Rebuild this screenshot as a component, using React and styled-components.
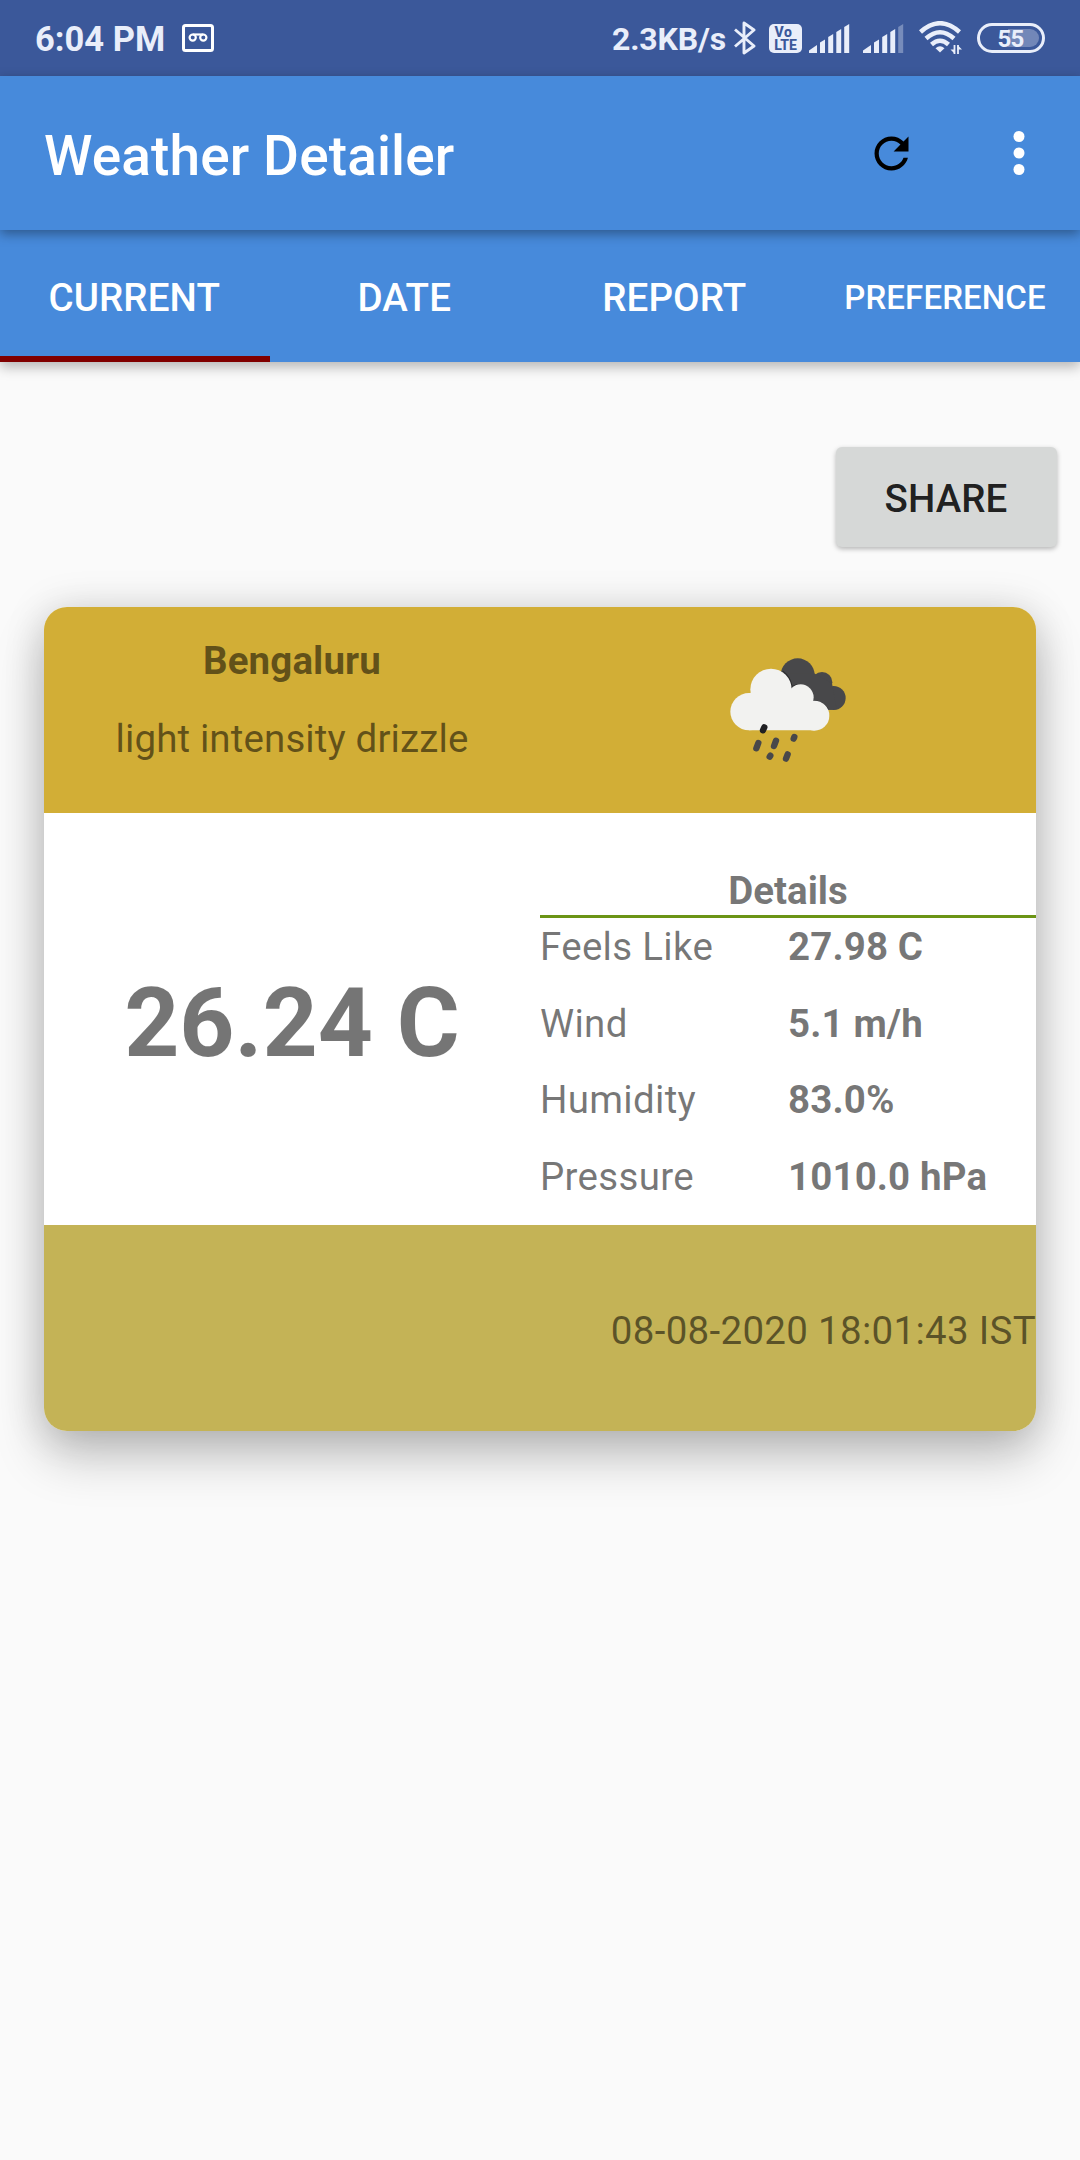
import React from "react";
import styled, { createGlobalStyle } from "styled-components";

const GlobalStyle = createGlobalStyle`
  * { box-sizing: border-box; }
  body {
    margin: 0;
    background: #fafafa;
    font-family: Roboto, "Liberation Sans", sans-serif;
    font-size: 38.5px;
    line-height: 46px;
  }
  svg { display: block; flex: none; }
`;

const Screen = styled.div`
  width: 1080px;
  height: 2160px;
  overflow: hidden;
  display: flex;
  flex-direction: column;
  background: #fafafa;
`;

const StatusBar = styled.header`
  height: 76px;
  flex: none;
  display: flex;
  align-items: center;
  justify-content: space-between;
  padding: 0 35px;
  background: #3b589a;
  color: #e9eefa;
`;

const StatusGroup = styled.div`
  display: flex;
  align-items: center;
  height: 76px;
`;

const StatusText = styled.span`
  font-size: ${(p) => p.$size}px;
  font-weight: ${(p) => p.$weight};
  letter-spacing: ${(p) => p.$spacing || 0}px;
  line-height: 40px;
  padding-top: ${(p) => p.$drop || 0}px;
  margin-right: ${(p) => p.$gap}px;
  white-space: nowrap;
`;

const IconSlot = styled.span`
  margin-right: ${(p) => p.$gap || 0}px;
`;

const VolteBadge = styled.span`
  width: 33px;
  height: 29px;
  margin-right: 7px;
  padding-top: 2px;
  border-radius: 5px;
  background: #e9eefa;
  color: #3b589a;
  display: flex;
  flex-direction: column;
  align-items: center;
  font-size: 14px;
  font-weight: 800;
  line-height: 13px;
`;

const VolteLine = styled.span`
  letter-spacing: ${(p) => p.$spacing}px;
  padding-right: ${(p) => p.$shift || 0}px;
  height: 13px;
`;

const Battery = styled.span`
  width: 68px;
  height: 30px;
  border: 3px solid #e9eefa;
  border-radius: 15px;
  display: flex;
  padding: 3px;
`;

const BatteryLevel = styled.span`
  flex: 1;
  border-radius: 9px;
  background: linear-gradient(90deg, transparent 45%, #7287b8 45%);
  display: flex;
  align-items: center;
  justify-content: center;
  padding-top: 1px;
  padding-right: 1px;
  font-size: 24px;
  font-weight: 700;
  letter-spacing: -0.8px;
`;

const AppBar = styled.div`
  height: 154px;
  flex: none;
  display: flex;
  align-items: center;
  justify-content: space-between;
  padding: 0 28px 0 44px;
  background: #478adb;
  box-shadow: 0 4px 11px rgba(0, 0, 0, 0.36);
  z-index: 2;
`;

const Title = styled.h1`
  margin: 6px 0 0;
  font-size: 55px;
  font-weight: 500;
  line-height: 64px;
  letter-spacing: 0.12px;
  color: #fff;
`;

const Actions = styled.div`
  display: flex;
  align-items: center;
  gap: 69px;
`;

const TabBar = styled.nav`
  height: 132px;
  flex: none;
  display: grid;
  grid-template-columns: repeat(4, 1fr);
  background: #478adb;
  box-shadow: 0 5px 12px rgba(0, 0, 0, 0.28);
  z-index: 1;
`;

const Tab = styled.div`
  display: flex;
  align-items: center;
  justify-content: center;
  padding: 9px ${(p) => (p.$small ? 0 : 1.5)}px 0 0;
  border-bottom: 6px solid ${(p) => (p.$active ? "#800000" : "transparent")};
  color: #fff;
  font-size: ${(p) => (p.$small ? 33 : 38.5)}px;
  font-weight: 500;
  letter-spacing: 0.1px;
`;

const Content = styled.main`
  flex: 1;
  display: flex;
  flex-direction: column;
  padding: 85px 44px 0;
`;

const ShareButton = styled.button`
  align-self: flex-end;
  width: 221px;
  height: 100px;
  margin: 0 -21px 60px 0;
  padding: 3px 1px 0 0;
  border: 0;
  border-radius: 6px;
  background: #d6d8d7;
  color: rgba(0, 0, 0, 0.87);
  font: 500 38.5px / 46px Roboto, "Liberation Sans", sans-serif;
  letter-spacing: 0.1px;
  box-shadow: 0 2px 5px rgba(0, 0, 0, 0.28);
`;

const Card = styled.section`
  height: 824px;
  border-radius: 23px;
  display: grid;
  grid-template-rows: 206px 412px 206px;
  overflow: hidden;
  background: #fff;
  color: rgba(0, 0, 0, 0.54);
  box-shadow: 0 26px 50px rgba(0, 0, 0, 0.22), 0 2px 40px rgba(0, 0, 0, 0.15);
`;

const Summary = styled.div`
  display: grid;
  grid-template-columns: 1fr 1fr;
  background: #d2ae36;
`;

const Place = styled.div`
  display: flex;
  flex-direction: column;
  align-items: center;
  padding-top: 15px;
  line-height: 78px;
  letter-spacing: 0.12px;
`;

const IconCell = styled.div`
  display: flex;
  align-items: center;
  justify-content: center;
`;

const Readings = styled.div`
  display: grid;
  grid-template-columns: 1fr 1fr;
`;

const Temperature = styled.div`
  display: flex;
  align-items: center;
  justify-content: center;
  padding-top: 8px;
  font-size: 96.25px;
  font-weight: 700;
  line-height: 112px;
`;

const Details = styled.div`
  padding-top: 55px;
`;

const DetailsTitle = styled.h2`
  margin: 0;
  height: 50px;
  border-bottom: 3px solid #6b9415;
  font-size: 38.5px;
  font-weight: 700;
  text-align: center;
`;

const DetailRows = styled.dl`
  margin: 0;
  padding-top: 6px;
  display: grid;
  grid-template-columns: 1fr 1fr;
  row-gap: 30.6px;
`;

const Label = styled.dt`
  white-space: nowrap;
  letter-spacing: 0.3px;
`;

const Value = styled.dd`
  margin: 0;
  font-weight: 700;
  white-space: nowrap;
  letter-spacing: 0.12px;
`;

const Footer = styled.div`
  display: flex;
  align-items: center;
  justify-content: flex-end;
  padding-top: 6px;
  letter-spacing: 0.3px;
  background: #c4b356;
`;

function VoicemailIcon() {
  return (
    <svg width="32" height="28" viewBox="0 0 32 28" fill="none" stroke="#fff">
      <rect x="1.5" y="1.5" width="29" height="25" rx="2" strokeWidth="3" />
      <circle cx="10.7" cy="13.6" r="3.1" strokeWidth="2.2" />
      <circle cx="21.3" cy="13.6" r="3.1" strokeWidth="2.2" />
      <path d="M10.7 10.5H21.3" strokeWidth="2.2" />
    </svg>
  );
}

function BluetoothIcon() {
  return (
    <svg width="22" height="34" viewBox="0 0 22 34" fill="none" stroke="#e9eefa" strokeWidth="2.9">
      <path d="M1 8.5L20 25L10 32V2L20 9L1 25.5" strokeLinejoin="round" />
    </svg>
  );
}

function SignalIcon({ weak }) {
  return (
    <svg width="41" height="29" viewBox="0 0 41 29" fill="#e9eefa">
      <path d="M0 29V26.5L8 21V29Z" />
      <path d="M11 29V18.5L16 15.5V29Z" />
      <path d="M19.2 29V13L24.2 10V29Z" />
      <path d="M27.3 29V8L32.2 5V29Z" />
      <path d="M35.2 29V3L40.2 0V29Z" opacity={weak ? 0.35 : 1} />
    </svg>
  );
}

function WifiIcon() {
  return (
    <svg width="43" height="34" viewBox="0 0 43 34" fill="none" stroke="#e9eefa" strokeWidth="4.5">
      <path d="M1.500 11Q21 -6.500 40.500 11" />
      <path d="M7 17.500Q21 5 35 17.500" />
      <path d="M12.500 23.500Q21 16 29.500 23.500" />
      <path d="M16.500 27.300Q21 23 25.500 27.300L21 31.500Z" fill="#e9eefa" stroke="none" />
      <path d="M35.500 24V33M39 24V33" strokeWidth="1.800" />
      <path d="M31.500 28.500H36V33ZM43 28.500H38.500V24Z" fill="#e9eefa" stroke="none" />
    </svg>
  );
}

function RefreshIcon() {
  return (
    <svg width="51" height="51" viewBox="0 0 24 24" fill="#000">
      <path d="M17.65 6.35C16.2 4.9 14.21 4 12 4c-4.42 0-7.99 3.58-7.99 8s3.57 8 7.99 8c3.73 0 6.84-2.55 7.73-6h-2.08c-.82 2.33-3.04 4-5.65 4-3.31 0-6-2.69-6-6s2.69-6 6-6c1.66 0 3.14.69 4.22 1.78L13 11h7V4l-2.35 2.35z" />
    </svg>
  );
}

function MoreIcon() {
  return (
    <svg width="66" height="66" viewBox="0 0 24 24" fill="#fff">
      <circle cx="12" cy="6" r="2" />
      <circle cx="12" cy="12" r="2" />
      <circle cx="12" cy="18" r="2" />
    </svg>
  );
}

function DrizzleIcon() {
  return (
    <svg width="130" height="120" viewBox="99 60 390 360">
      <g fill="#48484a">
        <circle cx="323" cy="136" r="51" />
        <circle cx="396" cy="157" r="31" />
        <circle cx="431" cy="204" r="36" />
        <path d="M290 130L372 130L426 160L440 238L415 240L330 220Z" />
      </g>
      <path d="M278 124Q300 140 306 171Q330 157 351 172Q368 184 368 213Q398 213 414 238" fill="none" stroke="#2c2c2e" strokeWidth="5" />
      <g fill="#f2f2f0">
        <circle cx="177" cy="245" r="56" />
        <circle cx="243" cy="178" r="62" />
        <circle cx="332" cy="202" r="39" />
        <circle cx="373" cy="257" r="45" />
        <path d="M177 190L220 180L350 190L373 230V301H177Z" />
      </g>
      <g stroke="#48484a" strokeLinecap="round" strokeWidth="19">
        <path d="M223 292L219 301" stroke="#202022" />
        <path d="M205 339L199 355" />
        <path d="M258 332L252 348" />
        <path d="M313 321L311 326" />
        <path d="M241 377L239 380" />
        <path d="M293 373L288 386" />
      </g>
    </svg>
  );
}

const tabs = [
  { name: "CURRENT", active: true },
  { name: "DATE" },
  { name: "REPORT" },
  { name: "PREFERENCE", small: true },
];

const readings = [
  ["Feels Like", "27.98 C"],
  ["Wind", "5.1 m/h"],
  ["Humidity", "83.0%"],
  ["Pressure", "1010.0 hPa"],
];

export default function App() {
  return (
    <Screen>
      <GlobalStyle />
      <StatusBar>
        <StatusGroup>
          <StatusText $size={34.5} $weight={700} $gap={17} $drop={2}>6:04 PM</StatusText>
          <VoicemailIcon />
        </StatusGroup>
        <StatusGroup>
          <StatusText $size={32} $weight={700} $spacing={-0.15} $gap={8} $drop={2}>2.3KB/s</StatusText>
          <IconSlot $gap={13}><BluetoothIcon /></IconSlot>
          <VolteBadge>
            <VolteLine $spacing={0.5} $shift={4}>Vo</VolteLine>
            <VolteLine $spacing={0}>LTE</VolteLine>
          </VolteBadge>
          <IconSlot $gap={13}><SignalIcon /></IconSlot>
          <IconSlot $gap={15}><SignalIcon weak /></IconSlot>
          <IconSlot $gap={15}><WifiIcon /></IconSlot>
          <Battery><BatteryLevel>55</BatteryLevel></Battery>
        </StatusGroup>
      </StatusBar>
      <AppBar>
        <Title>Weather Detailer</Title>
        <Actions>
          <RefreshIcon />
          <MoreIcon />
        </Actions>
      </AppBar>
      <TabBar>
        {tabs.map((t) => (
          <Tab key={t.name} $active={t.active} $small={t.small}>{t.name}</Tab>
        ))}
      </TabBar>
      <Content>
        <ShareButton>SHARE</ShareButton>
        <Card>
          <Summary>
            <Place>
              <b>Bengaluru</b>
              <span>light intensity drizzle</span>
            </Place>
            <IconCell><DrizzleIcon /></IconCell>
          </Summary>
          <Readings>
            <Temperature>26.24 C</Temperature>
            <Details>
              <DetailsTitle>Details</DetailsTitle>
              <DetailRows>
                {readings.map(([label, value]) => (
                  <React.Fragment key={label}>
                    <Label>{label}</Label>
                    <Value>{value}</Value>
                  </React.Fragment>
                ))}
              </DetailRows>
            </Details>
          </Readings>
          <Footer>08-08-2020 18:01:43 IST</Footer>
        </Card>
      </Content>
    </Screen>
  );
}
